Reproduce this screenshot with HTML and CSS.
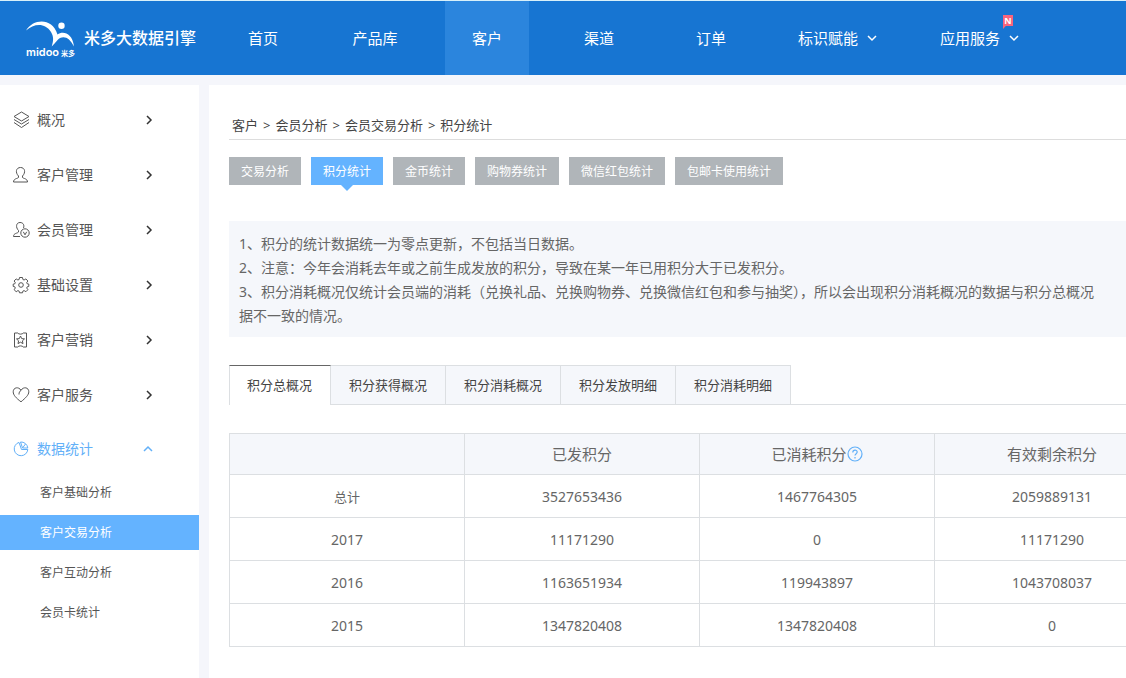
FILE: index.html
```html
<!DOCTYPE html>
<html lang="zh-CN">
<head>
<meta charset="utf-8">
<title>积分统计 - 米多大数据引擎</title>
<link rel="stylesheet" href="styles.css">
</head>
<body>
<header class="topbar">
  <a class="brand" href="#">
    <svg class="brand-logo" viewBox="0 0 52 42" role="img" aria-label="midoo 米多">
      <path d="M1 13.500C8 2 27 0 32.500 17.500c5-4 15-2 16.500 12-4-8-9-11-14-8.500-3 2-4 4.500-8.300 8.500 2-6 2-10-.7-14.500C20 5.500 9 6.500 1 13.500Z"/>
      <circle cx="36.500" cy="8.700" r="3.200"/>
      <text class="logo-latin" x="1" y="39">midoo</text>
      <text class="logo-cjk" x="36" y="39">米多</text>
    </svg>
    <span class="brand-name">米多大数据引擎</span>
  </a>
  <nav class="main-nav" aria-label="主导航">
    <a class="nav-item" href="#"><span class="nav-label">首页</span></a>
    <a class="nav-item" href="#"><span class="nav-label">产品库</span></a>
    <a class="nav-item" href="#" aria-current="page"><span class="nav-label active">客户</span></a>
    <a class="nav-item" href="#"><span class="nav-label">渠道</span></a>
    <a class="nav-item" href="#"><span class="nav-label">订单</span></a>
    <a class="nav-item wide" href="#"><span class="nav-label">标识赋能</span><svg class="caret" viewBox="0 0 12 12"><path d="m2 4 4 4 4-4"/></svg></a>
    <a class="nav-item wide" href="#"><span class="nav-label">应用服务</span><svg class="caret" viewBox="0 0 12 12"><path d="m2 4 4 4 4-4"/></svg><span class="new-flag">N</span></a>
  </nav>
</header>

<div class="layout">
  <aside class="sidebar">
    <nav aria-label="侧边导航">
      <button class="side-item" type="button">
        <svg class="side-icon" viewBox="0 0 18 18"><path d="m9.500 1 7.500 4.500L9.500 10 2 5.500ZM2 8.500 9.500 13 17 8.500M2 11.500l7.500 5 7.500-5"/></svg>
        <span>概况</span><svg class="arrow" viewBox="0 0 12 12"><path d="m4 2 4 4-4 4"/></svg>
      </button>
      <button class="side-item" type="button">
        <svg class="side-icon" viewBox="0 0 18 18"><path d="M6.500 10C3 6.500 4 1.500 8.500 1.500S14 6.500 10.500 10v1.500c1 1.200 5 1 5 4.500h-14c0-3.500 4-3.300 5-4.500Z"/></svg>
        <span>客户管理</span><svg class="arrow" viewBox="0 0 12 12"><path d="m4 2 4 4-4 4"/></svg>
      </button>
      <button class="side-item" type="button">
        <svg class="side-icon" viewBox="0 0 18 18"><path d="M8 15.500H1.500c0-3.500 4-3 5-4.500v-1.500C3.500 6.500 4 1.500 8 1.500c3.500 0 4.500 3 3.500 5.500"/><circle cx="13" cy="12" r="4.200"/><path d="m11.300 10.800 1.700 3 1.700-3"/></svg>
        <span>会员管理</span><svg class="arrow" viewBox="0 0 12 12"><path d="m4 2 4 4-4 4"/></svg>
      </button>
      <button class="side-item" type="button">
        <svg class="side-icon" viewBox="0 0 18 18"><circle cx="9" cy="9" r="2.300"/><path d="M7.500 1.500h3l.4 2 1.200.5 1.800-1.100 2 2.100L14.700 6.700l.5 1.100 1.600.3v2.300l-1.600.4-.5 1.200 1.200 1.700-2 2-1.800-1.100-1.200.5-.4 1.700h-3l-.4-1.700-1.200-.5-1.700 1.100-2.100-2 1.200-1.700-.5-1.200-1.600-.4V8.100l1.600-.3.5-1.100L2.100 5l2.100-2.100L5.900 4l1.200-.5Z"/></svg>
        <span>基础设置</span><svg class="arrow" viewBox="0 0 12 12"><path d="m4 2 4 4-4 4"/></svg>
      </button>
      <button class="side-item" type="button">
        <svg class="side-icon" viewBox="0 0 18 18"><path d="M2.500 2h3.300c.6 1.500 4.800 1.500 5.400 0h3.300v14h-3.300c-.6-1.500-4.800-1.500-5.400 0H2.500Z"/><path d="m8.500 5 1.200 2.600 2.800.3-2.100 1.900.6 2.800-2.500-1.400L6 12.600l.6-2.800-2.100-1.900 2.800-.3Z"/></svg>
        <span>客户营销</span><svg class="arrow" viewBox="0 0 12 12"><path d="m4 2 4 4-4 4"/></svg>
      </button>
      <button class="side-item" type="button">
        <svg class="side-icon" viewBox="0 0 18 18"><path d="M9 15.800C4 12 1.200 9 1.200 5.800c0-4.500 5.500-5.500 7.800-1.500 2.500-4 7.800-3 7.800 1.500 0 3.200-3.300 6.200-7.800 10ZM9 4.300C7.500 5.500 7 6.500 7 8.500"/></svg>
        <span>客户服务</span><svg class="arrow" viewBox="0 0 12 12"><path d="m4 2 4 4-4 4"/></svg>
      </button>
      <button class="side-item open" type="button" aria-expanded="true">
        <svg class="side-icon" viewBox="0 0 18 18"><path d="M7 2.400a6.800 6.800 0 1 0 8.800 7.100H9.500Z"/><path d="M8.500 2a6.800 6.800 0 0 1 7.300 6H10.500ZM10.500 8l3-4"/></svg>
        <span>数据统计</span><svg class="arrow" viewBox="0 0 12 12"><path d="m1 8 4-4 4 4"/></svg>
      </button>
      <div class="submenu">
        <a href="#">客户基础分析</a>
        <a class="current" href="#" aria-current="page">客户交易分析</a>
        <a href="#">客户互动分析</a>
        <a href="#">会员卡统计</a>
      </div>
    </nav>
  </aside>

  <main class="content">
    <nav class="breadcrumb" aria-label="面包屑">
      <a href="#">客户</a><span>&gt;</span><a href="#">会员分析</a><span>&gt;</span><a href="#">会员交易分析</a><span>&gt;</span><a href="#">积分统计</a>
    </nav>
    <div class="pills">
      <button class="pill" type="button">交易分析</button>
      <button class="pill selected" type="button">积分统计</button>
      <button class="pill" type="button">金币统计</button>
      <button class="pill" type="button">购物券统计</button>
      <button class="pill" type="button">微信红包统计</button>
      <button class="pill" type="button">包邮卡使用统计</button>
    </div>
    <div class="notes">
      <p>1、积分的统计数据统一为零点更新，不包括当日数据。</p>
      <p>2、注意：今年会消耗去年或之前生成发放的积分，导致在某一年已用积分大于已发积分。</p>
      <p>3、积分消耗概况仅统计会员端的消耗（兑换礼品、兑换购物券、兑换微信红包和参与抽奖），所以会出现积分消耗概况的数据与积分总概况<br>据不一致的情况。</p>
    </div>
    <div class="tabs" role="tablist">
      <button class="tab" type="button" role="tab" aria-selected="true">积分总概况</button>
      <button class="tab" type="button" role="tab" aria-selected="false">积分获得概况</button>
      <button class="tab" type="button" role="tab" aria-selected="false">积分消耗概况</button>
      <button class="tab" type="button" role="tab" aria-selected="false">积分发放明细</button>
      <button class="tab" type="button" role="tab" aria-selected="false">积分消耗明细</button>
    </div>
    <table class="stats">
      <thead>
        <tr><th></th><th>已发积分</th><th><span class="with-help">已消耗积分<button class="help" type="button" aria-label="说明"><svg viewBox="0 0 16 16"><circle cx="8" cy="8" r="7"/><path d="M5.800 6.500c0-3 4.400-3 4.400-.4C10.200 7.700 8 7.700 8 9.600M8 11v1.500"/></svg></button></span></th><th>有效剩余积分</th></tr>
      </thead>
      <tbody>
        <tr><td class="sum">总计</td><td>3527653436</td><td>1467764305</td><td>2059889131</td></tr>
        <tr><td>2017</td><td>11171290</td><td>0</td><td>11171290</td></tr>
        <tr><td>2016</td><td>1163651934</td><td>119943897</td><td>1043708037</td></tr>
        <tr><td>2015</td><td>1347820408</td><td>1347820408</td><td>0</td></tr>
      </tbody>
    </table>
  </main>
</div>
</body>
</html>
```
FILE: styles.css
```css
* { box-sizing: border-box; }

body {
  margin: 0;
  min-height: 100vh;
  display: flex;
  flex-direction: column;
  overflow-x: hidden;
  background: #f5f6fb;
  color: #555;
  font: 14px/20px "Noto Sans", "Noto Sans CJK SC", sans-serif;
}

a { color: inherit; text-decoration: none; }
button { margin: 0; border: 0; background: none; color: inherit; font: inherit; cursor: pointer; }
svg { fill: none; stroke: currentColor; }

/* Top bar */
.topbar {
  display: flex;
  height: 75px;
  border-top: 1px solid #d8f0fa;
  background: #1775d2;
  color: #fff;
}
.brand { display: flex; flex: none; align-items: center; gap: 7px; width: 207px; padding-left: 25px; }
.brand-logo { flex: none; width: 52px; height: 42px; fill: currentColor; stroke: none; }
.logo-latin { font: 600 11px Inter, sans-serif; }
.logo-cjk { font: 700 7px "Noto Sans CJK SC", sans-serif; }
.brand-name { font-size: 16px; font-weight: 500; white-space: nowrap; }
.main-nav { display: flex; font-size: 15px; }
.nav-item { position: relative; display: flex; align-items: center; justify-content: center; width: 112px; }
.nav-item.wide { width: 142px; gap: 8px; }
.nav-label.active { display: flex; align-items: center; justify-content: center; width: 84px; height: 100%; background: #2b85dd; }
.caret { width: 12px; height: 12px; stroke-width: 1.500; }
.new-flag {
  position: absolute;
  top: 14px;
  right: 38px;
  width: 10px;
  height: 14px;
  background: #f8647d;
  clip-path: polygon(0 0, 100% 0, 100% 78%, 28% 78%, 0 100%);
  font: 700 9px/11px "Noto Sans", sans-serif;
  text-align: center;
}

/* Page columns */
.layout { display: flex; flex: 1; gap: 10px; padding-top: 10px; }
.sidebar { flex: none; width: 199px; padding-top: 8px; background: #fff; }
.side-item { display: flex; align-items: center; width: 100%; height: 55px; padding: 0 44px 2px 12px; text-align: left; }
.side-item span { flex: 1; }
.side-icon { width: 18px; height: 18px; margin-right: 7px; }
.arrow { width: 12px; height: 12px; color: #333; stroke-width: 1.500; }
.side-item.open { height: 52px; padding-bottom: 0; }
.side-item.open, .side-item.open .arrow { color: #62b0f8; }
.submenu { display: flex; flex-direction: column; gap: 5px; font-size: 12px; }
.submenu a { height: 35px; padding-left: 40px; line-height: 35px; }
.submenu .current { background: #64b3ff; color: #fff; }

/* Content */
.content { flex: 1 0 981px; padding: 25px 20px 32px; background: #fff; }
.breadcrumb {
  display: flex;
  gap: 5px;
  height: 30px;
  padding-left: 3px;
  border-bottom: 1px solid #ddd;
  color: #444;
  font-size: 13px;
  line-height: 30px;
}
.pills { display: flex; gap: 10px; margin-top: 17px; }
.pill { position: relative; height: 28px; padding: 2px 12px 0; background: #b0b5b9; color: #fff; font-size: 12px; }
.pill.selected { background: #64b3ff; }
.pill.selected::after {
  content: "";
  position: absolute;
  top: 100%;
  left: 50%;
  margin-left: -6px;
  border: 6px solid transparent;
  border-top-color: #64b3ff;
  border-bottom: 0;
}
.notes { margin-top: 36px; padding: 11px 10px 9px; background: #f5f7fb; color: #666; line-height: 24px; }
.notes p { margin: 0; white-space: nowrap; }
.tabs { display: flex; margin-top: 28px; border-bottom: 1px solid #dcdfe2; background: #fff; }
.tab {
  height: 39px;
  padding: 0 18px;
  border-top: 1px solid #dcdfe2;
  border-right: 1px solid #dcdfe2;
  background: #f5f7fb;
  color: #444;
  font-size: 13px;
}
.tab[aria-selected="true"] {
  height: 40px;
  margin-bottom: -1px;
  padding: 0 18px 1px 17px;
  border-top-color: #666;
  border-left: 1px solid #dcdfe2;
  background: #fff;
}
.stats { width: 100%; margin-top: 28px; border-collapse: collapse; table-layout: fixed; color: #666; text-align: center; }
.stats th, .stats td { height: 43px; padding: 0; border: 1px solid #dcdfe2; }
.stats td { padding-top: 2px; }
.stats th { height: 41px; background: #f5f7fb; font-size: 15px; font-weight: 400; }
.stats .sum { font-size: 13px; }
.with-help { display: inline-flex; align-items: center; }
.help { display: flex; padding: 0; color: #62b0f8; }
.help svg { width: 16px; height: 16px; stroke-width: 1.200; }
```
